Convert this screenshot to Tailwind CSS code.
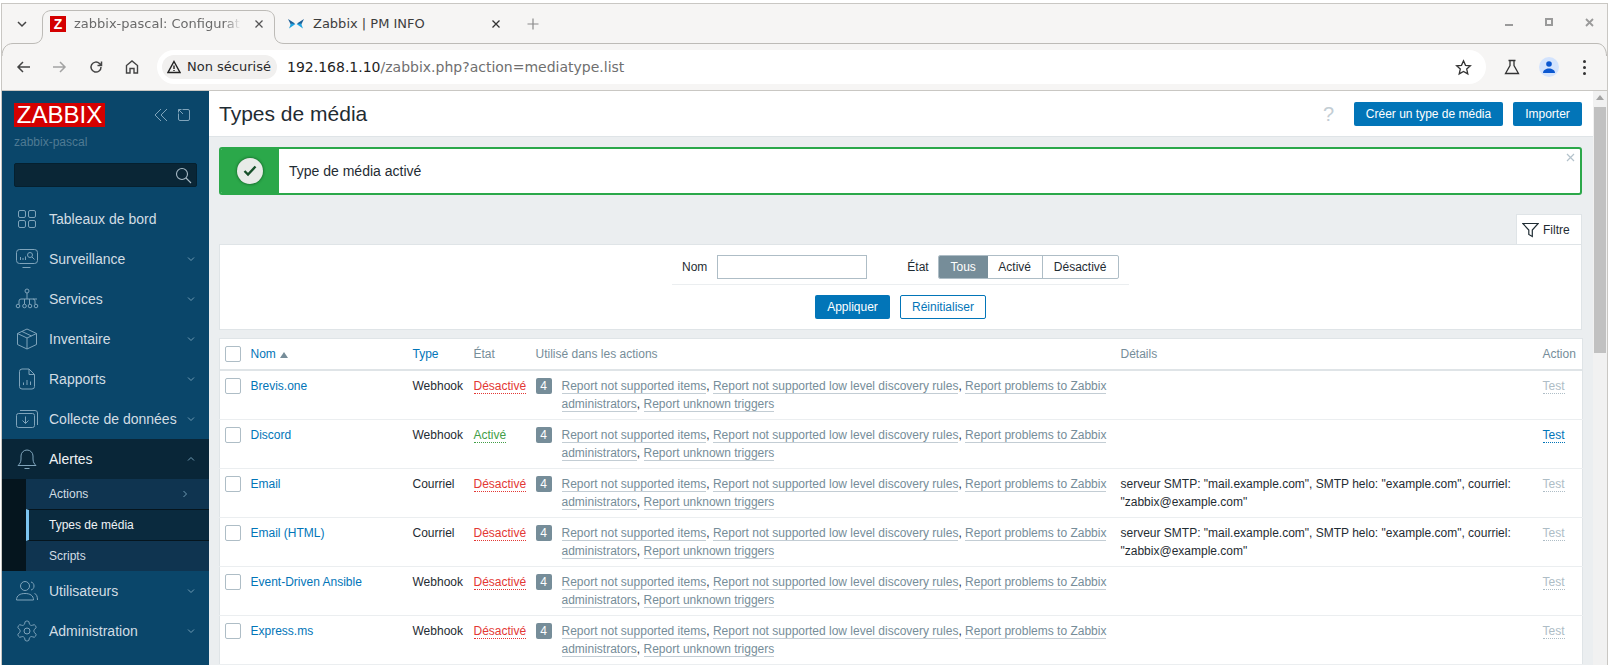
<!DOCTYPE html>
<html lang="fr">
<head>
  <meta charset="UTF-8" />
  <title>zabbix-pascal: Configuration des types de média</title>
  <script src="https://cdn.jsdelivr.net/npm/@tailwindcss/browser@4"></script>
</head>
<body class="h-[665px] w-[1610px] overflow-hidden bg-white pl-[1px] pt-[3px] [font-family:'Liberation_Sans',sans-serif] text-xs text-[#1f2c33]">
  <div class="relative flex h-[662px] w-[1607px] flex-col overflow-hidden border-x border-t border-[#c9c7c3] bg-[#f6f5f4]">
    <!-- tab outline -->
    <svg class="absolute left-[-2px] top-[-4px]" width="1610" height="60" fill="none" stroke="#bdbbb7">
      <path d="M2 56C2 49 6 43.500 13 43.500H33C39 43.500 42.500 40 42.500 34V19C42.500 13 47 10.500 52 10.500H265C270 10.500 274.500 13 274.500 19V34C274.500 40 278 43.500 284 43.500H1597C1603 43.500 1606.500 49 1606.500 56"/>
    </svg>

    <!-- tab strip -->
    <div class="flex h-[40px] items-center [font-family:'DejaVu_Sans',sans-serif] text-[13px] text-[#3d3d3d]">
      <svg class="ml-[14px]" width="12" height="12" viewBox="0 0 12 12" fill="none" stroke="#444" stroke-width="1.500"><path d="M2 4l4 4 4-4"/></svg>
      <div class="ml-[22px] flex w-[225px] items-center">
        <div class="flex h-[16px] w-[16px] items-center justify-center bg-[#d40000] [font-family:'Liberation_Sans',sans-serif] text-[14px] leading-none font-bold text-white">Z</div>
        <div class="ml-[8px] w-[167px] whitespace-nowrap text-[#6a6a6a] [mask-image:linear-gradient(to_right,black_90%,transparent)]">zabbix-pascal: Configurat</div>
        <svg class="ml-[13px]" width="10" height="10" viewBox="0 0 10 10" stroke="#555" stroke-width="1.300"><path d="M1.500 1.500l7 7M8.500 1.500l-7 7"/></svg>
      </div>
      <div class="ml-[13px] flex items-center">
        <svg width="16" height="10" viewBox="0 0 16 10"><path d="M0 0L7 4.500 3 6z" fill="#1c5f96"/><path d="M16 0L9 4.500 13 6z" fill="#1c5f96"/><path d="M1 9.500L3 4.500 7.500 5z" fill="#1fa3e0"/><path d="M15 9.500L13 4.500 8.500 5z" fill="#1fa3e0"/></svg>
        <div class="ml-[9px] w-[178px] whitespace-nowrap">Zabbix | PM INFO</div>
        <svg width="10" height="10" viewBox="0 0 10 10" stroke="#333" stroke-width="1.300"><path d="M1.500 1.500l7 7M8.500 1.500l-7 7"/></svg>
        <svg class="ml-[26px]" width="12" height="12" viewBox="0 0 12 12" stroke="#8a8a8a" stroke-width="1.200"><path d="M6 0.500v11M0.500 6h11"/></svg>
      </div>
      <div class="mb-[3px] ml-auto flex items-start">
        <div class="mt-[6px] h-[2px] w-[8px] bg-[#9a9a9a]"></div>
        <div class="ml-[32px] h-[8px] w-[8px] border-2 border-[#9a9a9a]"></div>
        <svg class="ml-[32px] mr-[13px]" width="9" height="9" viewBox="0 0 9 9" stroke="#9a9a9a" stroke-width="1.800"><path d="M1 1l7 7M8 1l-7 7"/></svg>
      </div>
    </div>

    <!-- toolbar -->
    <div class="flex h-[47px] items-center border-b border-[#c9c7c3] [font-family:'DejaVu_Sans',sans-serif]">
      <svg class="ml-[14px]" width="16" height="16" viewBox="0 0 16 16" fill="none" stroke="#444" stroke-width="1.500"><path d="M14 8H2M7 3L2 8l5 5"/></svg>
      <svg class="ml-[19px]" width="16" height="16" viewBox="0 0 16 16" fill="none" stroke="#a3a3a3" stroke-width="1.500"><path d="M2 8h12M9 3l5 5-5 5"/></svg>
      <svg class="ml-[21px]" width="16" height="16" viewBox="0 0 16 16" fill="none" stroke="#444" stroke-width="1.500"><path d="M13 8a5 5 0 1 1-1.500-3.500L13.500 6.500M13.500 2.500v4h-4"/></svg>
      <svg class="ml-[20px]" width="16" height="16" viewBox="0 0 16 16" fill="none" stroke="#444" stroke-width="1.400"><path d="M2.500 14V6.500L8 2l5.500 4.500V14h-3.500V9.500H6V14z"/></svg>
      <div class="ml-[17px] flex h-[34px] w-[1329px] items-center rounded-full bg-white pl-[5px]">
        <div class="flex h-[24px] w-[115px] items-center rounded-full bg-[#f1f0ef] pl-[5px] text-[13px] text-[#2c2c2c]">
          <svg width="14" height="14" viewBox="0 0 14 14" fill="none" stroke="#222" stroke-width="1.400"><path d="M7 1.500L13 12.500H1zM7 5.500v3.500M7 10v1"/></svg>
          <span class="ml-[6px] whitespace-nowrap">Non sécurisé</span>
        </div>
        <div class="ml-[10px] whitespace-nowrap text-sm text-[#1f1f1f]">192.168.1.10<span class="text-[#6f6f6f]">/zabbix.php?action=mediatype.list</span></div>
        <svg class="ml-auto mr-[14px]" width="17" height="17" viewBox="0 0 17 17" fill="none" stroke="#333" stroke-width="1.300"><path d="M8.500 1.800l2 4.500 4.900.5-3.700 3.300 1.100 4.800-4.300-2.500-4.300 2.500 1.100-4.800L1.600 6.800l4.900-.5z"/></svg>
      </div>
      <svg class="ml-[18px]" width="16" height="16" viewBox="0 0 16 16" fill="none" stroke="#333" stroke-width="1.300"><path d="M4.500 1.500h7M6 1.500v5L1.500 14.500h13L10 6.500v-5"/></svg>
      <div class="ml-[19px] flex h-[20px] w-[20px] items-center justify-center rounded-full bg-[#d3e3fd]">
        <svg width="14" height="14" viewBox="0 0 14 14" fill="#0b57d0"><circle cx="7" cy="4" r="2.800"/><path d="M1 13c0-3 3-4.500 6-4.500s6 1.500 6 4.500z"/></svg>
      </div>
      <div class="ml-[24px] flex flex-col gap-[3px]">
        <div class="h-[3px] w-[3px] rounded-full bg-[#333]"></div>
        <div class="h-[3px] w-[3px] rounded-full bg-[#333]"></div>
        <div class="h-[3px] w-[3px] rounded-full bg-[#333]"></div>
      </div>
    </div>

    <!-- page -->
    <div class="flex min-h-0 flex-1">
      <aside class="w-[207px] shrink-0 bg-[#0a466a] text-sm text-[#d2dde4]">
        <div class="flex items-center pl-[12px] pt-[12px]">
          <div class="flex h-[24px] w-[91px] items-center justify-center bg-[#d40000] text-[24px] leading-none text-white">ZABBIX</div>
          <svg class="ml-[49px]" width="14" height="14" viewBox="0 0 14 14" fill="none" stroke="#7fa4bb"><path d="M7 1L1 7l6 6M13 1L7 7l6 6"/></svg>
          <svg class="ml-[9px]" width="14" height="14" viewBox="0 0 14 14" fill="none" stroke="#7fa4bb"><path d="M5.500 1.500H11a1.500 1.500 0 0 1 1.500 1.500v8a1.500 1.500 0 0 1-1.500 1.500H3A1.500 1.500 0 0 1 1.500 11V5.500M1.500 4.500v-3h3M1.500 1.500L6 6"/></svg>
        </div>
        <div class="pl-[12px] pt-[8px] text-xs leading-[14px] text-[#4f7a93]">zabbix-pascal</div>
        <div class="ml-[12px] mt-[14px] flex h-[24px] w-[183px] items-center justify-end rounded-[2px] border border-[#05202f] bg-[#0a2636] pr-[4px]">
          <svg width="17" height="17" viewBox="0 0 17 17" fill="none" stroke="#a8bac6" stroke-width="1.100"><circle cx="7" cy="7" r="5.500"/><path d="M11 11l5 5"/></svg>
        </div>
        <nav class="mt-[12px]">
          <a class="flex h-[40px] items-center pl-[13px]">
            <svg class="w-[24px]" width="24" height="24" viewBox="0 0 24 24" fill="none" stroke="#7fa4bb"><rect x="3.500" y="3.500" width="7" height="7" rx="1.500"/><rect x="13.500" y="3.500" width="7" height="7" rx="1.500"/><rect x="3.500" y="13.500" width="7" height="7" rx="1.500"/><rect x="13.500" y="13.500" width="7" height="7" rx="1.500"/></svg>
            <span class="ml-[10px]">Tableaux de bord</span>
          </a>
          <a class="flex h-[40px] items-center pl-[13px]">
            <svg width="24" height="24" viewBox="0 0 24 24" fill="none" stroke="#7fa4bb"><rect x="1.500" y="2.500" width="21" height="14" rx="3"/><path d="M7.500 20.500h8M5.500 13v-3M8 13v-2M10.500 13V9.500"/><circle cx="15" cy="8" r="2.500"/><path d="M17 10l2.500 2.500"/></svg>
            <span class="ml-[10px]">Surveillance</span>
            <svg class="ml-auto mr-[14px]" width="8" height="8" viewBox="0 0 8 8" fill="none" stroke="#6f9ab3"><path d="M1 2.500l3 3 3-3"/></svg>
          </a>
          <a class="flex h-[40px] items-center pl-[13px]">
            <svg width="24" height="24" viewBox="0 0 24 24" fill="none" stroke="#7fa4bb"><circle cx="12" cy="4" r="2"/><path d="M12 6v6M4 17v-3q0-2 2-2h16M20 17v-3q0-2-2-2M9.500 12v5M14.500 12v5"/><circle cx="3" cy="19" r="1.800"/><circle cx="9.500" cy="19" r="1.800"/><circle cx="15" cy="19" r="1.800"/><circle cx="21" cy="19" r="1.800"/></svg>
            <span class="ml-[10px]">Services</span>
            <svg class="ml-auto mr-[14px]" width="8" height="8" viewBox="0 0 8 8" fill="none" stroke="#6f9ab3"><path d="M1 2.500l3 3 3-3"/></svg>
          </a>
          <a class="flex h-[40px] items-center pl-[13px]">
            <svg width="24" height="24" viewBox="0 0 24 24" fill="none" stroke="#7fa4bb"><path d="M12 2l9.500 4.500v11L12 22l-9.500-4.500v-11zM2.500 6.500L12 11l9.500-4.500M12 11v11M7 4.500l9.500 4.500"/></svg>
            <span class="ml-[10px]">Inventaire</span>
            <svg class="ml-auto mr-[14px]" width="8" height="8" viewBox="0 0 8 8" fill="none" stroke="#6f9ab3"><path d="M1 2.500l3 3 3-3"/></svg>
          </a>
          <a class="flex h-[40px] items-center pl-[13px]">
            <svg width="24" height="24" viewBox="0 0 24 24" fill="none" stroke="#7fa4bb"><path d="M14 2H7a2.500 2.500 0 0 0-2.500 2.500v15A2.500 2.500 0 0 0 7 22h10a2.500 2.500 0 0 0 2.500-2.500V7.500zM14 2v5.500h5.500M8.500 18v-2.500M12 18v-5M15.500 18v-3.500"/></svg>
            <span class="ml-[10px]">Rapports</span>
            <svg class="ml-auto mr-[14px]" width="8" height="8" viewBox="0 0 8 8" fill="none" stroke="#6f9ab3"><path d="M1 2.500l3 3 3-3"/></svg>
          </a>
          <a class="flex h-[40px] items-center pl-[13px]">
            <svg width="24" height="24" viewBox="0 0 24 24" fill="none" stroke="#7fa4bb"><rect x="1.500" y="6.500" width="18" height="14" rx="2"/><path d="M5 3.500h15a2.500 2.500 0 0 1 2.500 2.500v12M10.500 9.500v7M7.500 13.500l3 3 3-3"/></svg>
            <span class="ml-[10px]">Collecte de données</span>
            <svg class="ml-auto mr-[14px]" width="8" height="8" viewBox="0 0 8 8" fill="none" stroke="#6f9ab3"><path d="M1 2.500l3 3 3-3"/></svg>
          </a>
          <a class="flex h-[40px] items-center bg-[#092638] pl-[13px] text-[#eef2f5]">
            <svg width="24" height="24" viewBox="0 0 24 24" fill="none" stroke="#7fa4bb"><path d="M3 18.500h18c-1.500-1.500-3-3-3-6.500V9a6 6 0 0 0-12 0v3c0 3.500-1.500 5-3 6.500zM9.500 21.500h5"/></svg>
            <span class="ml-[10px]">Alertes</span>
            <svg class="ml-auto mr-[14px]" width="8" height="8" viewBox="0 0 8 8" fill="none" stroke="#6f9ab3"><path d="M1 5.500l3-3 3 3"/></svg>
          </a>
          <div class="border-l-[24px] border-[#05151e] bg-[#0f3450] text-xs text-[#d2dde4]">
            <a class="flex h-[30px] items-center pl-[23px]">Actions
              <svg class="ml-auto mr-[20px]" width="8" height="8" viewBox="0 0 8 8" fill="none" stroke="#6f9ab3"><path d="M2.500 1l3 3-3 3"/></svg>
            </a>
            <a class="flex h-[32px] items-center border-y border-l-[3px] border-y-[#05151e] border-l-[#7cc4f0] bg-[#0a2a3e] pl-[20px] text-[#eef2f5]">Types de média</a>
            <a class="flex h-[30px] items-center pl-[23px]">Scripts</a>
          </div>
          <a class="flex h-[40px] items-center pl-[13px]">
            <svg width="24" height="24" viewBox="0 0 24 24" fill="none" stroke="#7fa4bb"><circle cx="10" cy="7" r="4.500"/><path d="M1.500 21c0-4.500 3.500-6.500 8.500-6.500s8.500 2 8.500 6.500zM16 3c2 .5 3 2 3 4s-1 3.500-3 4M19.500 14.500c2 .5 3 3 3 6.500"/></svg>
            <span class="ml-[10px]">Utilisateurs</span>
            <svg class="ml-auto mr-[14px]" width="8" height="8" viewBox="0 0 8 8" fill="none" stroke="#6f9ab3"><path d="M1 2.500l3 3 3-3"/></svg>
          </a>
          <a class="flex h-[40px] items-center pl-[13px]">
            <svg width="24" height="24" viewBox="0 0 24 24" fill="none" stroke="#7fa4bb"><path d="M12.220 2h-.44a2 2 0 0 0-2 2v.18a2 2 0 0 1-1 1.730l-.43.250a2 2 0 0 1-2 0l-.15-.08a2 2 0 0 0-2.730.730l-.22.380a2 2 0 0 0 .730 2.730l.15.100a2 2 0 0 1 1 1.720v.510a2 2 0 0 1-1 1.740l-.15.090a2 2 0 0 0-.730 2.730l.22.380a2 2 0 0 0 2.730.730l.15-.08a2 2 0 0 1 2 0l.43.250a2 2 0 0 1 1 1.730V20a2 2 0 0 0 2 2h.44a2 2 0 0 0 2-2v-.18a2 2 0 0 1 1-1.730l.43-.25a2 2 0 0 1 2 0l.15.080a2 2 0 0 0 2.730-.730l.22-.39a2 2 0 0 0-.730-2.730l-.15-.08a2 2 0 0 1-1-1.740v-.5a2 2 0 0 1 1-1.740l.15-.09a2 2 0 0 0 .730-2.730l-.22-.38a2 2 0 0 0-2.730-.730l-.15.080a2 2 0 0 1-2 0l-.43-.25a2 2 0 0 1-1-1.730V4a2 2 0 0 0-2-2z"/><circle cx="12" cy="12" r="3"/></svg>
            <span class="ml-[10px]">Administration</span>
            <svg class="ml-auto mr-[14px]" width="8" height="8" viewBox="0 0 8 8" fill="none" stroke="#6f9ab3"><path d="M1 2.500l3 3 3-3"/></svg>
          </a>
        </nav>
      </aside>

      <main class="min-w-0 flex-1 bg-[#ebeef0]">
        <header class="flex h-[46px] items-center border-b border-[#dfe4e7] bg-white pl-[10px] pr-[11px]">
          <h1 class="text-[21px] leading-none">Types de média</h1>
          <span class="ml-auto mr-[20px] text-[20px] leading-none text-[#c3cdd4]">?</span>
          <button class="h-[24px] w-[149px] rounded-[2px] bg-[#0275b8] text-white">Créer un type de média</button>
          <button class="ml-[10px] h-[24px] w-[69px] rounded-[2px] bg-[#0275b8] text-white">Importer</button>
        </header>

        <div class="pl-[10px] pr-[11px]">
          <div class="relative mt-[10px] flex h-[48px] overflow-hidden rounded-[3px] border-2 border-[#2ba84a] bg-white">
            <div class="flex w-[58px] items-center justify-center bg-[#2ba84a]">
              <div class="flex h-[26px] w-[26px] items-center justify-center rounded-full bg-[#e8ebe8] shadow-[0_0_3px_#0b4d1c]">
                <svg width="14" height="12" viewBox="0 0 14 12" fill="none" stroke="#17502a" stroke-width="2.400"><path d="M1.500 6l3.500 3.500 7.500-8"/></svg>
              </div>
            </div>
            <div class="flex items-center pl-[10px] text-sm">Type de média activé</div>
            <svg class="absolute right-[5px] top-[4px]" width="9" height="9" viewBox="0 0 9 9" stroke="#b4c2cb" stroke-width="1.200"><path d="M1 1l7 7M8 1l-7 7"/></svg>
          </div>

          <div class="mt-[19px] flex justify-end">
            <div class="flex h-[30px] w-[66px] items-center border-x border-t border-[#dfe4e7] bg-white pl-[5px]">
              <svg width="17" height="16" viewBox="0 0 17 16" fill="none" stroke="#1f2c33" stroke-width="1.200"><path d="M0.800 1.500h15.400L10.300 8v6.500l-3.500-2V8z"/></svg>
              <span class="ml-[4px]">Filtre</span>
            </div>
          </div>
          <section class="flex h-[86px] flex-col items-center border border-[#dfe4e7] bg-white">
            <div class="flex h-[40px] w-[457px] items-start border-b border-[#ebeef0] pl-[10px] pt-[10px]">
              <span class="leading-[24px]">Nom</span>
              <div class="ml-[10px] h-[24px] w-[150px] border border-[#aebdc6]"></div>
              <span class="ml-[40px] leading-[24px]">État</span>
              <div class="ml-[9px] flex h-[24px] w-[181px] overflow-hidden rounded-[2px] border border-[#aebdc6]">
                <span class="flex w-[49px] items-center justify-center bg-[#768d99] text-white">Tous</span>
                <span class="flex w-[55px] items-center justify-center border-r border-[#aebdc6]">Activé</span>
                <span class="flex flex-1 items-center justify-center">Désactivé</span>
              </div>
            </div>
            <div class="mt-[10px] flex gap-[10px]">
              <button class="h-[24px] w-[75px] rounded-[2px] bg-[#0275b8] text-white">Appliquer</button>
              <button class="h-[24px] w-[86px] rounded-[2px] border border-[#0275b8] text-[#0275b8]">Réinitialiser</button>
            </div>
          </section>

          <table class="mt-[8px] w-[1363px] table-fixed border-x border-t border-[#dfe4e7] bg-white leading-[18px]">
            <colgroup>
              <col class="w-[26px]" /><col class="w-[162px]" /><col class="w-[61px]" /><col class="w-[62px]" /><col class="w-[585px]" /><col class="w-[422px]" /><col class="w-[45px]" />
            </colgroup>
            <thead class="text-[#768d99]">
              <tr class="h-[31px] border-b-2 border-[#dfe4e7]">
                <th class="pl-[5px] text-left font-normal"><div class="h-[16px] w-[16px] rounded-[2px] border border-[#aebdc6]"></div></th>
                <th class="px-[5px] text-left font-normal text-[#0275b8]">Nom <span class="ml-[1px] inline-block h-0 w-0 border-x-[4px] border-b-[6px] border-x-transparent border-b-[#768d99]"></span></th>
                <th class="px-[5px] text-left font-normal text-[#0275b8]">Type</th>
                <th class="px-[5px] text-left font-normal">État</th>
                <th class="px-[5px] text-left font-normal">Utilisé dans les actions</th>
                <th class="px-[5px] text-left font-normal">Détails</th>
                <th class="px-[5px] text-left font-normal">Action</th>
              </tr>
            </thead>
            <tbody id="rows"></tbody>
          </table>
        </div>
      </main>

      <div class="flex w-[14px] shrink-0 flex-col items-center bg-[#f1f1f1]">
        <div class="mt-[4px] h-0 w-0 border-x-[4px] border-b-[5px] border-x-transparent border-b-[#a3a3a3]"></div>
        <div class="mt-[7px] h-[246px] w-[12px] bg-[#c1c1c1]"></div>
      </div>
    </div>
  </div>

  <script>
    const mail = 'serveur SMTP: "mail.example.com", SMTP helo: "example.com", courriel: "zabbix@example.com"';
    const mediaTypes = [
      ["Brevis.one", "Webhook", false, ""],
      ["Discord", "Webhook", true, ""],
      ["Email", "Courriel", false, mail],
      ["Email (HTML)", "Courriel", false, mail],
      ["Event-Driven Ansible", "Webhook", false, ""],
      ["Express.ms", "Webhook", false, ""]
    ];
    const link = (text) => `<a class="border-b border-[#c3cdd4] text-[#768d99]">${text}</a>`;
    // the third action wraps, so each line gets its own link
    const actions = `${link("Report not supported items")}, ${link("Report not supported low level discovery rules")}, ${link("Report problems to Zabbix")}<br />${link("administrators")}, ${link("Report unknown triggers")}`;

    document.getElementById("rows").innerHTML = mediaTypes.map(([name, type, active, details]) => `
      <tr class="border-b border-[#ebeef0] align-top">
        <td class="py-[6px] pl-[5px]"><div class="mt-[1px] h-[16px] w-[16px] rounded-[2px] border border-[#aebdc6]"></div></td>
        <td class="px-[5px] py-[6px] text-[#0275b8]">${name}</td>
        <td class="px-[5px] py-[6px]">${type}</td>
        <td class="px-[5px] py-[6px] whitespace-nowrap">
          ${active
            ? `<span class="border-b border-dotted border-[#429e47] text-[#429e47]">Activé</span>`
            : `<span class="border-b border-dotted border-[#e33734] text-[#e33734]">Désactivé</span>`}
        </td>
        <td class="px-[5px] py-[6px]">
          <div class="flex">
            <span class="mt-[1px] flex h-[16px] w-[16px] shrink-0 items-center justify-center rounded-[2px] bg-[#768d99] text-white">4</span>
            <div class="ml-[10px]">${actions}</div>
          </div>
        </td>
        <td class="px-[5px] py-[6px]">${details}</td>
        <td class="px-[5px] py-[6px]">
          ${active
            ? `<span class="border-b border-dotted border-[#0275b8] text-[#0275b8]">Test</span>`
            : `<span class="border-b border-dotted border-[#aebdc6] text-[#aebdc6]">Test</span>`}
        </td>
      </tr>`).join("");
  </script>
</body>
</html>
